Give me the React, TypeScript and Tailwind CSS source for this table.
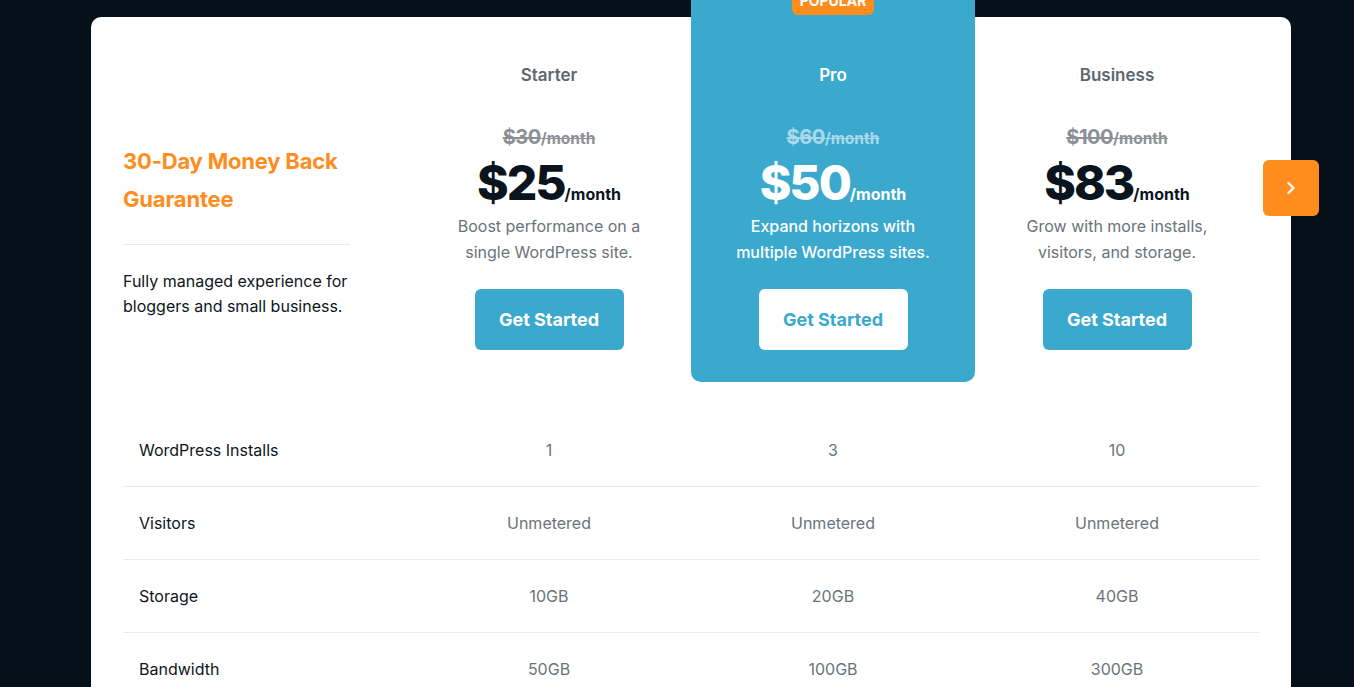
import React from "react";
import { ChevronRight } from "lucide-react";

const plans = [
  { name: "Starter", old: "$30", price: "$25", desc: ["Boost performance on a", "single WordPress site."], pro: false },
  { name: "Pro", old: "$60", price: "$50", desc: ["Expand horizons with", "multiple WordPress sites."], pro: true },
  { name: "Business", old: "$100", price: "$83", desc: ["Grow with more installs,", "visitors, and storage."], pro: false },
];

const rows = [
  { label: "WordPress Installs", values: ["1", "3", "10"] },
  { label: "Visitors", values: ["Unmetered", "Unmetered", "Unmetered"] },
  { label: "Storage", values: ["10GB", "20GB", "40GB"] },
  { label: "Bandwidth", values: ["50GB", "100GB", "300GB"] },
];

export default function App() {
  return (
    <div
      className="h-[687px] overflow-hidden bg-[#061019] pt-[17px]"
      style={{ fontFamily: "Inter, 'Noto Sans', sans-serif" }}
    >
      <div className="relative ml-[91px] w-[1200px] rounded-[10px] bg-white px-8 pb-10">
        <div className="grid grid-cols-4">
          <div className="pt-[125px]">
            <h2 className="text-[22px] font-bold leading-[38px] tracking-[-0.2px] text-[#ff8d1d]">
              30-Day Money Back Guarantee
            </h2>
            <div className="mt-[26px] h-px w-[227px] bg-[#e8eaec]" />
            <p className="mt-6 text-[16px] leading-[25px] text-[#0d1620]">
              Fully managed experience for bloggers and small business.
            </p>
          </div>
          {plans.map((p) => (
            <div
              key={p.name}
              className={
                p.pro
                  ? "relative -mt-[17px] flex flex-col items-center rounded-b-[10px] bg-[#3ba9cd] pt-[63px] pb-8"
                  : "flex flex-col items-center pt-[46px] pb-8"
              }
            >
              {p.pro && (
                <div className="absolute top-[-11px] left-1/2 flex h-[26px] w-[82px] -translate-x-1/2 items-center justify-center rounded-[6px] bg-[#ff8d1d] pb-[3px] text-[14px] font-bold text-white">
                  POPULAR
                </div>
              )}
              <div className={`text-[17px] leading-[24px] font-semibold ${p.pro ? "text-white" : "text-[#5d6770]"}`}>
                {p.name}
              </div>
              <div
                className={`mt-[36px] flex items-baseline font-bold leading-[28px] line-through ${p.pro ? "text-[#a9d9ea]" : "text-[#8b9196]"}`}
              >
                <span className="text-[20px] tracking-[-0.5px]">{p.old}</span>
                <span className="text-[15.5px]">/month</span>
              </div>
              <div className={`mt-[10px] flex h-[40px] items-baseline leading-[40px] ${p.pro ? "text-white" : "text-[#0a141c]"}`}>
                <span className="text-[48px] font-extrabold tracking-[-2px]">{p.price}</span>
                <span className="text-[16px] font-bold">/month</span>
              </div>
              <div className={`mt-[10px] text-center text-[16px] leading-[26px] ${p.pro ? "font-medium text-white" : "text-[#6b737a]"}`}>
                {p.desc[0]}
                <br />
                {p.desc[1]}
              </div>
              <button
                className={`mt-6 flex h-[61px] w-[149px] items-center justify-center rounded-[6px] text-[18px] font-bold ${p.pro ? "bg-white text-[#3ba9cd]" : "bg-[#3ba9cd] text-white"}`}
              >
                Get Started
              </button>
            </div>
          ))}
        </div>
        <div className="mt-8">
          {rows.map((r) => (
            <div key={r.label} className="grid h-[73px] grid-cols-4 items-center border-b border-[#e8eaec]">
              <div className="pl-4 text-[16px] text-[#0d1620]">{r.label}</div>
              {r.values.map((v, i) => (
                <div key={i} className="text-center text-[16px] text-[#6b737a]">
                  {v}
                </div>
              ))}
            </div>
          ))}
        </div>
        <button className="absolute top-[143px] left-[1172px] flex h-[56px] w-[56px] items-center justify-center rounded-[6px] bg-[#ff8d1d]">
          <ChevronRight className="h-5 w-5 text-white" strokeWidth={2.75} />
        </button>
      </div>
    </div>
  );
}
